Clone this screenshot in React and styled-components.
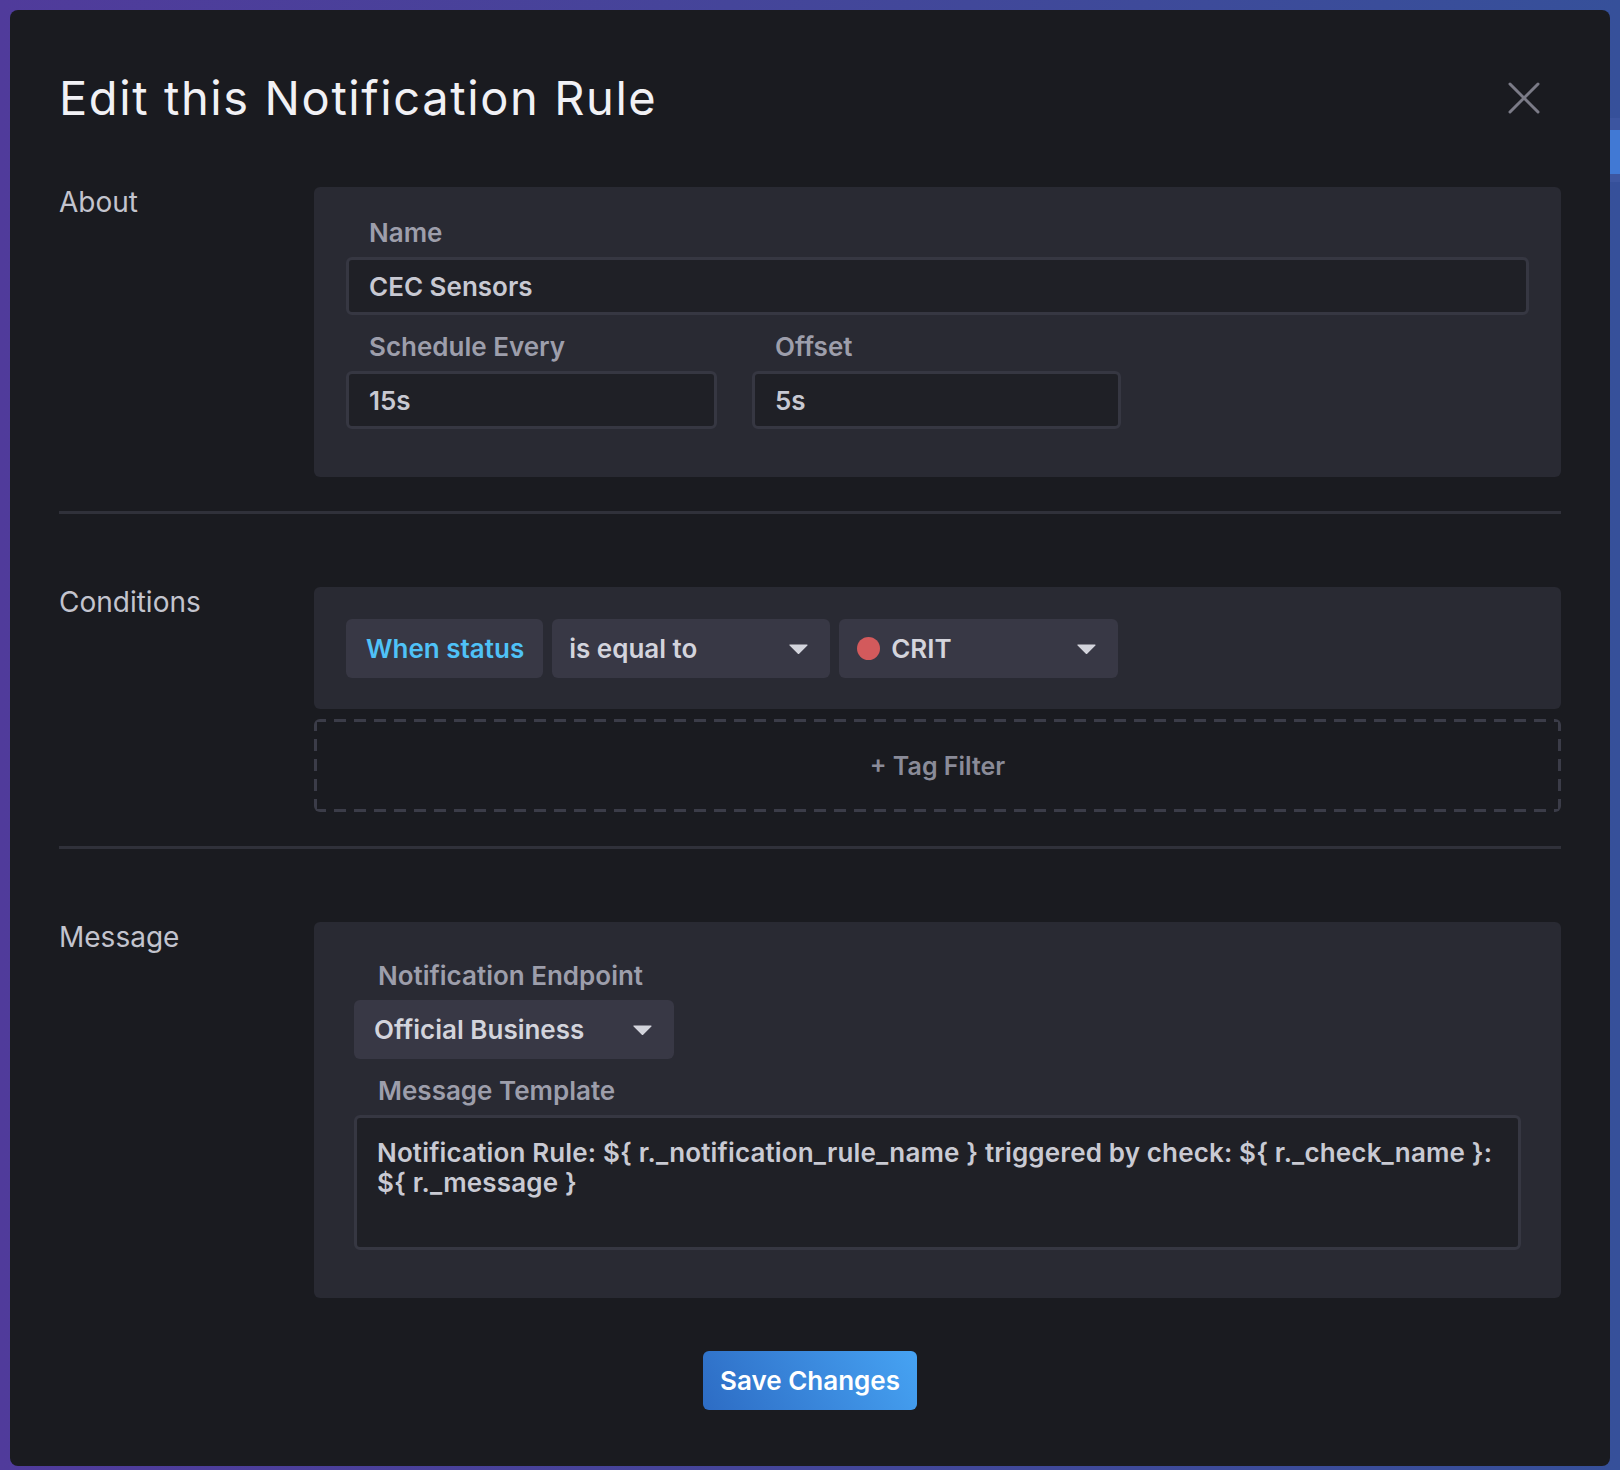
import React from "react"
import styled, { createGlobalStyle } from "styled-components"

const GlobalStyle = createGlobalStyle`
    html, body {
        margin: 0;
        padding: 0;
        background: #3b4796;
    }
    * {
        box-sizing: border-box;
    }
    body {
        font-family: Inter, "Noto Sans", sans-serif;
        -webkit-font-smoothing: antialiased;
    }
`

const Backdrop = styled.div`
    position: relative;
    width: 1620px;
    min-height: 1470px;
    padding: 10px 10px 3px;
    background: linear-gradient(90deg, #503b9b 0%, #45459a 45%, #36509a 100%);
    overflow: hidden;
`

const GhostBlock = styled.div`
    position: absolute;
    right: 0;
    top: ${p => p.top}px;
    width: 14px;
    height: ${p => p.h}px;
    background: ${p => p.color};
`

const Modal = styled.div`
    position: relative;
    width: 1600px;
    background: #1a1b20;
    border-radius: 8px;
    padding: 60px 49px 56px;
`

const Header = styled.div`
    display: flex;
    align-items: center;
    justify-content: space-between;
    margin-bottom: 61px;
`

const Title = styled.h1`
    margin: 0;
    font-size: 47px;
    line-height: 56px;
    font-weight: 400;
    color: #f1f1f5;
    letter-spacing: 1.6px;
`

const CloseButton = styled.button`
    display: flex;
    align-items: center;
    justify-content: center;
    width: 32px;
    height: 32px;
    margin-right: 21px;
    padding: 0;
    border: 0;
    background: transparent;
    cursor: pointer;
`

const Section = styled.div`
    display: grid;
    grid-template-columns: 255px 1fr;
`

const SectionLabel = styled.div`
    font-size: 28px;
    line-height: 34px;
    font-weight: 400;
    color: #c3c4ce;
    margin-top: -2px;
`

const Panel = styled.div`
    background: #292a33;
    border-radius: 6px;
    padding: ${p => p.pad};
`

const Field = styled.div`
    margin-bottom: 16px;
`

const Label = styled.div`
    font-size: 26px;
    line-height: 32px;
    font-weight: 600;
    color: #9d9eab;
    padding-left: ${p => p.indent || 23}px;
    margin-bottom: 8px;
`

const Input = styled.div`
    display: flex;
    align-items: center;
    height: 58px;
    padding: 0 20px;
    background: #1f2026;
    border: 3px solid #363742;
    border-radius: 6px;
    font-size: 26px;
    font-weight: 600;
    color: #c8c9d2;
`

const FieldGrid = styled.div`
    display: grid;
    grid-template-columns: 371px 369px;
    column-gap: 35px;
`

const Divider = styled.div`
    height: 3px;
    background: #30313a;
    margin: 34px 0 73px;
`

const ChipRow = styled.div`
    display: flex;
    gap: 9px;
`

const Chip = styled.div`
    display: flex;
    align-items: center;
    height: 59px;
    padding: 0 19px 0 20px;
    background: #383845;
    border-radius: 6px;
    font-size: 26px;
    font-weight: 600;
    color: #4fc2f7;
`

const Dropdown = styled.div`
    display: flex;
    align-items: center;
    gap: 11px;
    width: ${p => p.width}px;
    height: 59px;
    padding: 0 22px 0 ${p => p.padLeft || 19}px;
    background: #383845;
    border-radius: 6px;
    font-size: 26px;
    font-weight: 600;
    color: #d3d4dc;
`

const DropdownText = styled.span`
    flex: 1;
    white-space: nowrap;
`

const Dot = styled.span`
    width: 23px;
    height: 23px;
    border-radius: 50%;
    background: #d35a5c;
    flex-shrink: 0;
`

const dash = "#3b3c48"

const TagFilter = styled.div`
    display: flex;
    align-items: center;
    justify-content: center;
    height: 93px;
    margin-top: 10px;
    border-radius: 6px;
    background-image:
        repeating-linear-gradient(90deg, ${dash} 0 12px, transparent 12px 20px),
        repeating-linear-gradient(90deg, ${dash} 0 12px, transparent 12px 20px),
        repeating-linear-gradient(180deg, ${dash} 0 12px, transparent 12px 20px),
        repeating-linear-gradient(180deg, ${dash} 0 12px, transparent 12px 20px);
    background-size: 100% 3px, 100% 3px, 3px 100%, 3px 100%;
    background-position: 0 0, 0 100%, 0 0, 100% 0;
    background-repeat: no-repeat;
    font-size: 25px;
    font-weight: 600;
    color: #8a8b98;
`

const TemplateBox = styled.textarea`
    display: block;
    width: 100%;
    height: 135px;
    padding: 20px;
    background: #1f2026;
    border: 3px solid #363742;
    border-radius: 6px;
    font-family: Inter, "Noto Sans", sans-serif;
    font-size: 26px;
    line-height: 30px;
    font-weight: 600;
    letter-spacing: 0.15px;
    color: #c9cad3;
    resize: none;
    overflow: hidden;
    outline: none;
`

const Footer = styled.div`
    display: flex;
    justify-content: center;
    margin-top: 53px;
`

const SaveButton = styled.button`
    width: 214px;
    height: 59px;
    border: 0;
    border-radius: 6px;
    background: linear-gradient(60deg, #2d6cc4 0%, #3b8ade 55%, #46a3f3 100%);
    font-family: Inter, "Noto Sans", sans-serif;
    font-size: 26px;
    font-weight: 600;
    color: #ffffff;
    cursor: pointer;
`

const Caret = () => (
    <svg width="19" height="10" viewBox="0 0 19 10">
        <path d="M1 1 L18 1 L9.5 9.5 Z" fill="#d3d4dc" stroke="#d3d4dc" strokeWidth="1.2" strokeLinejoin="round" />
    </svg>
)

const CloseIcon = () => (
    <svg width="32" height="32" viewBox="0 0 32 32">
        <path d="M2 2 L30 30 M30 2 L2 30" stroke="#7b7b87" strokeWidth="3" strokeLinecap="round" />
    </svg>
)

const template = "Notification Rule: ${ r._notification_rule_name } triggered by check: ${ r._check_name }: ${ r._message }"

export default function App() {
    return (
        <>
            <GlobalStyle />
            <Backdrop>
                <GhostBlock top={118} h={12} color="#3c55a0" />
                <GhostBlock top={130} h={44} color="#4179d4" />
                <GhostBlock top={174} h={8} color="#3d56a0" />
                <Modal>
                    <Header>
                        <Title>Edit this Notification Rule</Title>
                        <CloseButton aria-label="Close">
                            <CloseIcon />
                        </CloseButton>
                    </Header>

                    <Section>
                        <SectionLabel>About</SectionLabel>
                        <Panel pad="30px 32px 32px">
                            <Field>
                                <Label>Name</Label>
                                <Input>CEC Sensors</Input>
                            </Field>
                            <FieldGrid>
                                <Field>
                                    <Label>Schedule Every</Label>
                                    <Input>15s</Input>
                                </Field>
                                <Field>
                                    <Label>Offset</Label>
                                    <Input>5s</Input>
                                </Field>
                            </FieldGrid>
                        </Panel>
                    </Section>

                    <Divider />

                    <Section>
                        <SectionLabel>Conditions</SectionLabel>
                        <div>
                            <Panel pad="32px 32px 31px">
                                <ChipRow>
                                    <Chip>When status</Chip>
                                    <Dropdown width={278} padLeft={17}>
                                        <DropdownText>is equal to</DropdownText>
                                        <Caret />
                                    </Dropdown>
                                    <Dropdown width={279} padLeft={18}>
                                        <Dot />
                                        <DropdownText>CRIT</DropdownText>
                                        <Caret />
                                    </Dropdown>
                                </ChipRow>
                            </Panel>
                            <TagFilter>+ Tag Filter</TagFilter>
                        </div>
                    </Section>

                    <Divider />

                    <Section>
                        <SectionLabel>Message</SectionLabel>
                        <Panel pad="38px 40px 48px">
                            <Field>
                                <Label indent={24}>Notification Endpoint</Label>
                                <Dropdown width={320} padLeft={20}>
                                    <DropdownText>Official Business</DropdownText>
                                    <Caret />
                                </Dropdown>
                            </Field>
                            <Label indent={24}>Message Template</Label>
                            <TemplateBox readOnly value={template} />
                        </Panel>
                    </Section>

                    <Footer>
                        <SaveButton>Save Changes</SaveButton>
                    </Footer>
                </Modal>
            </Backdrop>
        </>
    )
}
